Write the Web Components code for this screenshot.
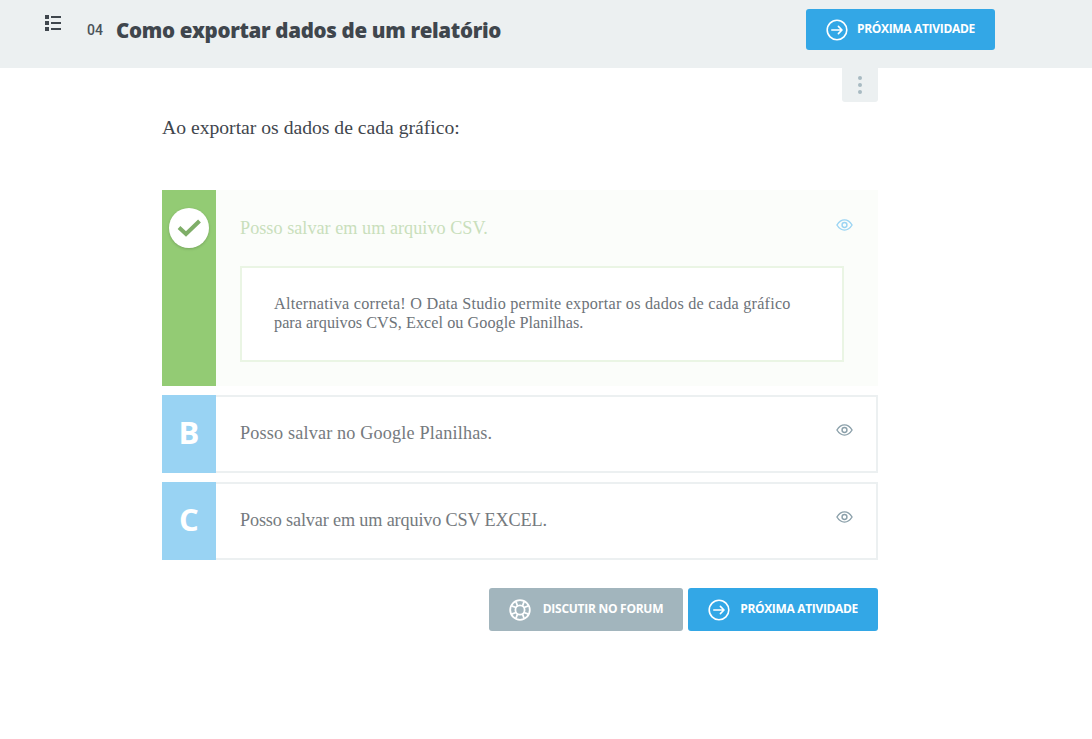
<!DOCTYPE html>
<html lang="pt"><head><meta charset="utf-8"><title>Como exportar dados</title>
<style>
html,body{margin:0;padding:0;background:#fff}
body{font-family:"Liberation Serif",serif;width:1092px;height:739px;overflow:hidden}
</style></head><body>
<course-header number="04" heading="Como exportar dados de um relatório"></course-header>
<activity-body>
  <p slot="question">Ao exportar os dados de cada gráfico:</p>
  <answer-option state="correct" text="Posso salvar em um arquivo CSV." style="--ls:.02px"><span style="letter-spacing:.24px">Alternativa correta! O Data Studio permite exportar os dados de cada gráfico</span><br><span style="letter-spacing:.04px">para arquivos CVS, Excel ou Google Planilhas.</span></answer-option>
  <answer-option letter="B" text="Posso salvar no Google Planilhas." style="--ls:.16px"></answer-option>
  <answer-option letter="C" text="Posso salvar em um arquivo CSV EXCEL." style="--ls:-.15px"></answer-option>
  <div slot="actions" style="display:flex;justify-content:flex-end;gap:5px">
    <action-button variant="grey" icon="help" label="DISCUTIR NO FORUM" style="--gap:12px;--ts:-.27px"></action-button>
    <action-button icon="next" label="PRÓXIMA ATIVIDADE"></action-button>
  </div>
</activity-body>
<script>
const ICONS={
 next:`<svg width="22" height="22" viewBox="0 0 22 22" fill="none" stroke="#fff" stroke-width="1.6" stroke-linecap="round" stroke-linejoin="round"><circle cx="11" cy="11" r="9.8"/><path d="M5.8 11h10M12.4 7.4l3.6 3.6-3.6 3.6"/></svg>`,
 help:`<svg width="22" height="22" viewBox="0 0 22 22" fill="none" stroke="#fff" stroke-width="1.8"><circle cx="11" cy="11" r="9.8"/><circle cx="11" cy="11" r="4.6"/><path d="M6.9 2.5L8.500 7M15.100 2.500L13.500 7M2.500 6.900L7 8.500M19.500 6.900L15 8.500M6.900 19.500L8.500 15M15.100 19.500L13.500 15M2.500 15.100L7 13.500M19.500 15.100L15 13.500"/></svg>`
};
class ActionButton extends HTMLElement{
 connectedCallback(){
  const s=this.shadowRoot||this.attachShadow({mode:"open"});
  s.innerHTML=`<style>
  :host{display:inline-flex;align-items:center;height:43px;border-radius:3px;background:#33a7e6;color:#fff;box-sizing:border-box;padding:0 20px;
  font:700 12px "Open Sans",sans-serif;letter-spacing:var(--ts,-.33px);white-space:nowrap}
  :host([variant=grey]){background:#a2b5bd;color:#fff}
  :host([compact]){height:41px}
  span{display:block;margin-left:var(--gap,10px);position:relative;top:-1px}
  svg{display:block;flex:none}
  </style>${ICONS[this.getAttribute("icon")]}<span>${this.getAttribute("label")}</span>`;
 }
}
customElements.define("action-button",ActionButton);
class CourseHeader extends HTMLElement{
 connectedCallback(){
  const s=this.attachShadow({mode:"open"});
  s.innerHTML=`<style>
  :host{display:flex;height:68px;background:#ecf0f1;box-sizing:border-box;padding-left:45px;color:#3f464d}
  .menu{margin-top:15px;display:block;width:17px;height:16px;flex:none}
  .num{font:500 14px Roboto,sans-serif;margin-left:25px;margin-top:22px;width:29px;color:#4b5359}
  h1{margin:16px 0 0;font:800 20.5px/29px "Open Sans",sans-serif;letter-spacing:-.32px;width:690px;white-space:nowrap;color:#3f464d}
  action-button{margin-top:9px;--gap:9px;width:189px;padding-left:20px}
  </style>
  <svg class="menu" viewBox="0 0 17 16" fill="#3f464d"><rect width="4" height="4"/><rect y="6" width="4" height="4"/><rect y="12" width="4" height="4"/><rect x="6" y="1" width="10" height="2"/><rect x="6" y="7" width="10" height="2"/><rect x="6" y="13" width="10" height="2"/></svg>
  <div class="num">${this.getAttribute("number")}</div>
  <h1>${this.getAttribute("heading")}</h1>
  <action-button compact icon="next" label="PRÓXIMA ATIVIDADE"></action-button>`;
 }
}
customElements.define("course-header",CourseHeader);
class ActivityBody extends HTMLElement{
 constructor(){super();
  this.attachShadow({mode:"open"}).innerHTML=`<style>
  :host{display:block;width:716px;margin-left:162px;position:relative}
  .kebab{width:36px;height:34px;margin-left:auto;background:#ecf0f1;border-radius:0 0 3px 3px;display:flex;flex-direction:column;align-items:center;justify-content:center;gap:3px}
  .kebab i{display:block;width:4px;height:4px;border-radius:50%;background:#a8bac2}
  .q{height:88px;font-size:19.65px;line-height:24px;color:#3f464d;padding-top:13px;box-sizing:border-box}
  ::slotted(p){margin:0}
  .opts{display:flex;flex-direction:column;gap:9px}
  .act{margin-top:28px}
  </style>
  <div class="kebab"><i></i><i></i><i></i></div>
  <div class="q"><slot name="question"></slot></div>
  <div class="opts"><slot></slot></div>
  <div class="act"><slot name="actions"></slot></div>`;
 }
}
customElements.define("activity-body",ActivityBody);
class AnswerOption extends HTMLElement{
 connectedCallback(){
  const ok=this.getAttribute("state")==="correct";
  const l=this.getAttribute("letter")||"";
  const s=this.attachShadow({mode:"open"});
  s.innerHTML=`<style>
  :host{display:flex;box-sizing:border-box;min-height:78px;border:2px solid #ecf0f1;border-left:0;background:#fff}
  :host([state=correct]){border:0;background:#fbfdfa}
  .tag{width:54px;flex:none;margin:-2px 0;background:#99d3f3;color:#fff;font:700 31px/74px "Open Sans",sans-serif;text-align:center}
  :host([state=correct]) .tag{margin:0;background:#93cb74}
  .disc{width:40px;height:40px;border-radius:50%;background:#fff;margin:18px auto 0;display:flex;align-items:center;justify-content:center;box-shadow:0 1px 3px rgba(0,0,0,.18)}
  .main{flex:1;padding:0 23px 0 24px;min-width:0}
  :host([state=correct]) .main{padding:0 34px 24px 24px}
  .row{display:flex;justify-content:space-between;height:74px;box-sizing:border-box;padding-top:24px;font-size:18.2px;line-height:24px;color:#757a7e;letter-spacing:var(--ls,0)}
  :host([state=correct]) .row{height:76px;padding-top:26px;color:#c9dfbc;margin-right:-9px}
  svg.eye{display:block;margin-top:2px;flex:none}
  :host([state=correct]) svg.eye{stroke:#9ad4f3}
  .fb{border:2px solid #eaf5e4;background:#fff;height:96px;box-sizing:border-box;padding:27px 32px 0;font-size:16.2px;line-height:19px;color:#6d7379;white-space:nowrap}
  </style>
  <div class="tag">${ok?`<div class="disc"><svg width="24" height="18" viewBox="0 0 24 18" fill="none" stroke="#7fae68" stroke-width="4"><path d="M2 8.500l7 6.500L22.500 2"/></svg></div>`:l}</div>
  <div class="main"><div class="row"><span>${this.getAttribute("text")}</span>
  <svg class="eye" width="17" height="14" viewBox="0 0 18 14" fill="none" stroke="#8ba0aa" stroke-width="1.5"><path d="M1 7C3.200 3.400 5.900 1.600 9 1.600S14.800 3.400 17 7C14.800 10.600 12.100 12.400 9 12.400S3.200 10.600 1 7Z"/><circle cx="9" cy="7" r="2.600"/></svg></div>
  ${ok?`<div class="fb"><slot></slot></div>`:""}</div>`;
 }
}
customElements.define("answer-option",AnswerOption);
</script>
</body></html>
